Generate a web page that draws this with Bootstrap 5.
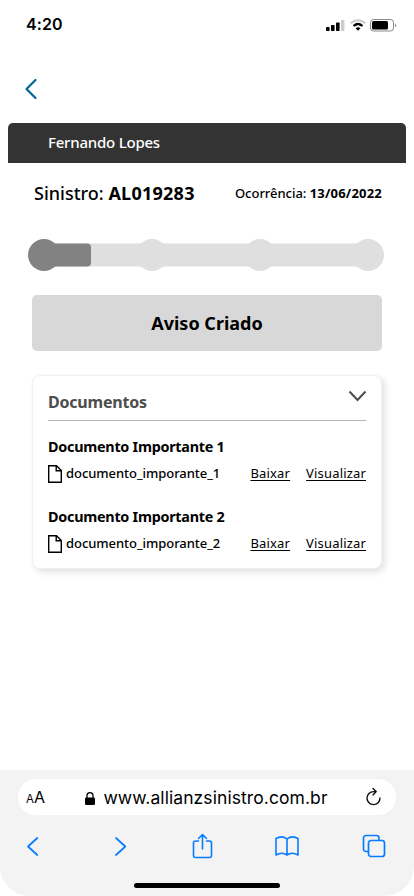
<!DOCTYPE html>
<html lang="pt-BR">
<head>
<meta charset="utf-8">
<meta name="viewport" content="width=device-width, initial-scale=1">
<title>Sinistro AL019283</title>
<link href="https://cdn.jsdelivr.net/npm/bootstrap@5.3.0/dist/css/bootstrap.min.css" rel="stylesheet">
<style>
html,body{height:100%}
body{font-family:"Noto Sans","Open Sans",sans-serif;color:#000;background:#fff;overflow:hidden}
svg{display:block;flex:none;overflow:visible}
.screen{width:414px;height:896px}
.statusbar{height:50px;padding:0 17px 0 26px;font:600 16px/48px Inter,sans-serif;letter-spacing:.1px}
.clock{margin-top:-3px}
.backbar{height:73px;padding:29px 0 0 25px}
.userbar{height:40px;margin:0 8px;padding-left:40px;background:#333;color:#fff;border-radius:5px 5px 0 0;font-size:15px;font-weight:500;line-height:39px}
.t-user{letter-spacing:-.22px}
.claim{height:60px;padding:0 32px 0 34px;font-size:18px;font-weight:500;white-space:nowrap}
.claim b{letter-spacing:.25px}
.occurred{font-size:13px;padding-top:1px;letter-spacing:-.03px}
.claim .occurred b{letter-spacing:.2px}
.steps{height:32px;margin:16px 30px 0 28px}
.steps-track{height:23px;margin:0 8px;background:#dfdfdf}
.steps-done{width:55px;height:23px;background:#828282;border-radius:0 4px 4px 0}
.step-dot{width:32px;height:32px;border-radius:50%;background:#dfdfdf}
.step-dot.done{background:#828282}
.state{height:56px;margin:24px 32px 0;background:#d8d8d8;border-radius:5px;font-size:18px}
.docs{height:194px;margin:24px 32px 0;padding:0 15px;border:1px solid #f0f0f0;border-radius:8px;box-shadow:3px 3px 7px rgba(0,0,0,.12)}
.docs-head{height:45px;border-bottom:1px solid #b4b4b4;color:#4d4d4d}
.docs-title{font-size:16px;line-height:20px;padding-top:16px;letter-spacing:-.2px}
.doc{height:70px;padding-top:16px}
.doc-title{font-size:14.4px;line-height:20px;letter-spacing:-.27px}
.doc-row{height:24px;margin-top:5px;font-size:13px;line-height:22px;white-space:nowrap}
.doc-row span,.doc-row a{margin-top:-3px}
.t-file{letter-spacing:-.05px}
.doc-row a{color:#000;text-underline-offset:2px;text-decoration-thickness:1px;letter-spacing:.17px}
.browser{height:126px;background:#f3f3f3;border-radius:0 0 30px 30px;padding:9px 18px 0}
.address{height:36px;background:#fff;border-radius:18px;font:17.5px/36px Inter,sans-serif;padding:0 15px 0 8px}
.site{padding:2px 0 0 2px}
.t-url{letter-spacing:.08px}
.tools{height:62px;padding-left:9px;color:#087cff;grid-template-columns:88px 78px 82px 87px 23px}
.homebar{width:146px;height:5px;border-radius:3px;background:#000;margin:6px auto 0}
.aa{font-size:16px;padding-top:1px}.aa small{font-size:11.5px}
</style>
</head>
<body>
<div class="screen d-flex flex-column">
  <header class="statusbar d-flex justify-content-between align-items-center">
    <span class="clock">4:20</span>
    <svg width="71" height="14" viewBox="0 0 71 14">
      <rect x="0" y="9" width="3.6" height="4" rx=".8"/><rect x="5" y="7" width="3.6" height="6" rx=".8"/><rect x="10" y="4.5" width="3.6" height="8.5" rx=".8"/><rect x="15" y="2" width="3.4" height="11" rx=".8" fill="#ccc"/>
      <g fill="none" stroke-width="2"><path d="M24.7 5.2Q32 -.6 39.3 5.2" stroke="#c8c8c8"/><path d="M27.5 8Q32 4 36.500 8" stroke="#000" stroke-width="2.200"/></g>
      <path d="M29.500 10.200Q32 8.500 34.500 10.200L32 12.700Z"/>
      <rect x="44.500" y="1.500" width="23" height="11.500" rx="3" fill="none" stroke="#888"/><rect x="46" y="3" width="16" height="8.500" rx="1.500"/><path d="M69 5.400Q71.600 7.200 69 9.200Z" fill="#888"/>
    </svg>
  </header>
  <nav class="backbar"><svg width="13" height="20" fill="none" stroke="#006597" stroke-width="2.200" stroke-linecap="round" stroke-linejoin="round"><path d="M10.500 1L1.500 10L10.500 19"/></svg></nav>
  <div class="userbar"><span class="t-user">Fernando Lopes</span></div>
  <div class="claim d-flex justify-content-between align-items-center">
    <span class="t-claim">Sinistro: <b>AL019283</b></span>
    <span class="occurred">Ocorrência: <b>13/06/2022</b></span>
  </div>
  <div class="steps position-relative">
    <div class="steps-track position-absolute top-50 start-0 end-0 translate-middle-y"><div class="steps-done"></div></div>
    <div class="position-relative d-flex justify-content-between">
      <span class="step-dot done"></span><span class="step-dot"></span><span class="step-dot"></span><span class="step-dot"></span>
    </div>
  </div>
  <div class="state d-flex align-items-center justify-content-center fw-bold"><span class="t-state">Aviso Criado</span></div>
  <section class="docs bg-white">
    <div class="docs-head d-flex justify-content-between">
      <span class="docs-title fw-bold">Documentos</span>
      <svg class="mt-3" width="18" height="10" fill="none" stroke="#4d4d4d" stroke-width="2"><path d="M1.500 -.5L9.500 8L17.500 -.5"/></svg>
    </div>
    <article class="doc">
      <div class="doc-title fw-bold"><span class="t-doc">Documento Importante 1</span></div>
      <div class="doc-row d-flex align-items-center">
        <svg width="14" height="18" fill="none" stroke="#000" stroke-width="1.400"><path d="M.7 .7H8.500L13.300 5.500V17.300H.7ZM8.200 .7V5.800H13.300"/></svg>
        <span class="t-file fw-medium ms-1 me-auto">documento_imporante_1</span>
        <a class="t-down me-3" href="#">Baixar</a><a class="t-view" href="#">Visualizar</a>
      </div>
    </article>
    <article class="doc">
      <div class="doc-title fw-bold"><span class="t-doc">Documento Importante 2</span></div>
      <div class="doc-row d-flex align-items-center">
        <svg width="14" height="18" fill="none" stroke="#000" stroke-width="1.400"><path d="M.7 .7H8.500L13.300 5.500V17.300H.7ZM8.200 .7V5.800H13.300"/></svg>
        <span class="t-file fw-medium ms-1 me-auto">documento_imporante_2</span>
        <a class="t-down me-3" href="#">Baixar</a><a class="t-view" href="#">Visualizar</a>
      </div>
    </article>
  </section>
  <footer class="browser mt-auto">
    <div class="address d-flex align-items-center justify-content-between">
      <span class="aa"><small>A</small>A</span>
      <span class="site d-flex align-items-center gap-2">
        <svg width="10" height="13"><rect y="5.500" width="10" height="7.500" rx="1.200"/><path d="M2 6V3.600A3 3 0 0 1 8 3.600V6" fill="none" stroke="#000" stroke-width="1.300"/></svg>
        <span class="t-url lh-1">www.allianzsinistro.com.br</span>
      </span>
      <svg width="15" height="18" fill="none" stroke="#111" stroke-width="1.400" stroke-linecap="round" stroke-linejoin="round"><path d="M9.800 3.600H7.500A6.500 6.500 0 1 0 14 10M7 .5L10.200 3.600L7 7"/></svg>
    </div>
    <div class="tools d-grid align-items-center">
      <svg width="12" height="19" fill="none" stroke="currentColor" stroke-width="1.700" stroke-linecap="round" stroke-linejoin="round"><path d="M10.300 1L1 9.500L10.300 18"/></svg>
      <svg width="12" height="19" fill="none" stroke="currentColor" stroke-width="1.700" stroke-linecap="round" stroke-linejoin="round"><path d="M1 1L10.300 9.500L1 18"/></svg>
      <svg width="20" height="25" fill="none" stroke="currentColor" stroke-width="1.600" stroke-linecap="round" stroke-linejoin="round"><path d="M5.500 7H2.500A2 2 0 0 0 .5 9V21.500A2 2 0 0 0 2.500 23.500H16.500A2 2 0 0 0 18.500 21.500V9A2 2 0 0 0 16.500 7H13.500M9.500 15V.5M5.500 4.500L9.500 .5L13.500 4.500"/></svg>
      <svg width="24" height="20" fill="none" stroke="currentColor" stroke-width="1.600" stroke-linejoin="round"><path d="M12 3Q7-1 1 2.500V19Q7 15.500 12 19Q17 15.500 23 19V2.500Q17-1 12 3V19"/></svg>
      <svg width="23" height="23" fill="none" stroke="currentColor" stroke-width="1.700"><rect x="6.500" y="5.500" width="16" height="16" rx="2.500"/><path d="M6.500 16.500H4A2.500 2.500 0 0 1 1.500 14V3A2.500 2.500 0 0 1 4 .5H14.500A2.500 2.500 0 0 1 17 3V5.500"/></svg>
    </div>
    <div class="homebar"></div>
  </footer>
</div>
<script src="https://cdn.jsdelivr.net/npm/bootstrap@5.3.0/dist/js/bootstrap.bundle.min.js"></script>
</body>
</html>
